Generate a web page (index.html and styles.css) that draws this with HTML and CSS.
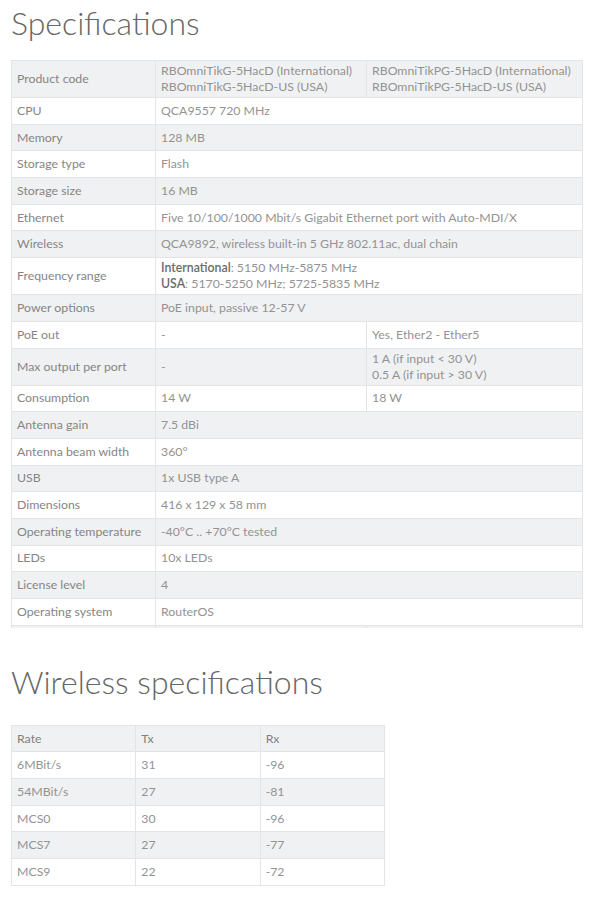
FILE: index.html
```html
<!DOCTYPE html>
<html>
<head>
<meta charset="utf-8">
<link rel="stylesheet" href="styles.css">
</head>
<body>
<div class="page">
  <h1 class="title">Specifications</h1>
  <table class="spec">
    <colgroup><col class="c1"><col class="c2"><col class="c3"></colgroup>
    <tr><td>Product code</td><td>RBOmniTikG-5HacD (International)<br>RBOmniTikG-5HacD-US (USA)</td><td>RBOmniTikPG-5HacD (International)<br>RBOmniTikPG-5HacD-US (USA)</td></tr>
    <tr><td>CPU</td><td colspan="2">QCA9557 720 MHz</td></tr>
    <tr><td>Memory</td><td colspan="2">128 MB</td></tr>
    <tr><td>Storage type</td><td colspan="2">Flash</td></tr>
    <tr><td>Storage size</td><td colspan="2">16 MB</td></tr>
    <tr><td>Ethernet</td><td colspan="2">Five 10/100/1000 Mbit/s Gigabit Ethernet port with Auto-MDI/X</td></tr>
    <tr><td>Wireless</td><td colspan="2">QCA9892, wireless built-in 5 GHz 802.11ac, dual chain</td></tr>
    <tr><td>Frequency range</td><td colspan="2"><b>International</b>: 5150 MHz-5875 MHz<br><b>USA</b>: 5170-5250 MHz; 5725-5835 MHz</td></tr>
    <tr><td>Power options</td><td colspan="2">PoE input, passive 12-57 V</td></tr>
    <tr><td>PoE out</td><td>-</td><td>Yes, Ether2 - Ether5</td></tr>
    <tr><td>Max output per port</td><td>-</td><td>1 A (if input &lt; 30 V)<br>0.5 A (if input &gt; 30 V)</td></tr>
    <tr><td>Consumption</td><td>14 W</td><td>18 W</td></tr>
    <tr><td>Antenna gain</td><td colspan="2">7.5 dBi</td></tr>
    <tr><td>Antenna beam width</td><td colspan="2">360°</td></tr>
    <tr><td>USB</td><td colspan="2">1x USB type A</td></tr>
    <tr><td>Dimensions</td><td colspan="2">416 x 129 x 58 mm</td></tr>
    <tr><td>Operating temperature</td><td colspan="2">-40°C .. +70°C tested</td></tr>
    <tr><td>LEDs</td><td colspan="2">10x LEDs</td></tr>
    <tr><td>License level</td><td colspan="2">4</td></tr>
    <tr><td>Operating system</td><td colspan="2">RouterOS</td></tr>
    <tr class="stub"><td></td><td></td><td></td></tr>
  </table>

  <h1 class="title title2">Wireless specifications</h1>
  <table class="wl">
    <tr><td>Rate</td><td>Tx</td><td>Rx</td></tr>
    <tr><td>6MBit/s</td><td>31</td><td>-96</td></tr>
    <tr><td>54MBit/s</td><td>27</td><td>-81</td></tr>
    <tr><td>MCS0</td><td>30</td><td>-96</td></tr>
    <tr><td>MCS7</td><td>27</td><td>-77</td></tr>
    <tr><td>MCS9</td><td>22</td><td>-72</td></tr>
  </table>
</div>
</body>
</html>
```
FILE: styles.css
```css
html, body {
  margin: 0;
  padding: 0;
  background: #fff;
}
.page {
  padding: 0 0 0 11px;
  font-family: Lato, "Open Sans", sans-serif;
  color: #939393;
}
.title {
  margin: 0;
  padding-top: 4px;
  font-size: 32px;
  font-weight: 300;
  line-height: 38px;
  color: #666;
  height: 56px;
}
.title2 {
  padding-top: 0;
  margin-top: 25px;
  height: 72px;
  line-height: 58px;
}
table {
  border-collapse: collapse;
  font-size: 12.3px;
  line-height: 16px;
}
td {
  border: 1px solid #e3e4e5;
  padding: 2px 5px;
  height: 21.7px;
  vertical-align: middle;
  white-space: nowrap;
}
tr:nth-child(odd) td {
  background: #f0f1f2;
}
.spec {
  width: 571px;
  table-layout: fixed;
}
.c1 { width: 144px; }
.c2 { width: 211px; }
.c3 { width: 216px; }
.spec td:first-child {
  color: #858585;
}
b {
  font-weight: 600;
  color: #6a6a6a;
}
.spec tr.stub td {
  height: 2px;
  padding: 0;
  border-bottom: none;
}
.wl {
  width: 374px;
  table-layout: fixed;
}
.wl tr:first-child td {
  color: #808080;
}
```
